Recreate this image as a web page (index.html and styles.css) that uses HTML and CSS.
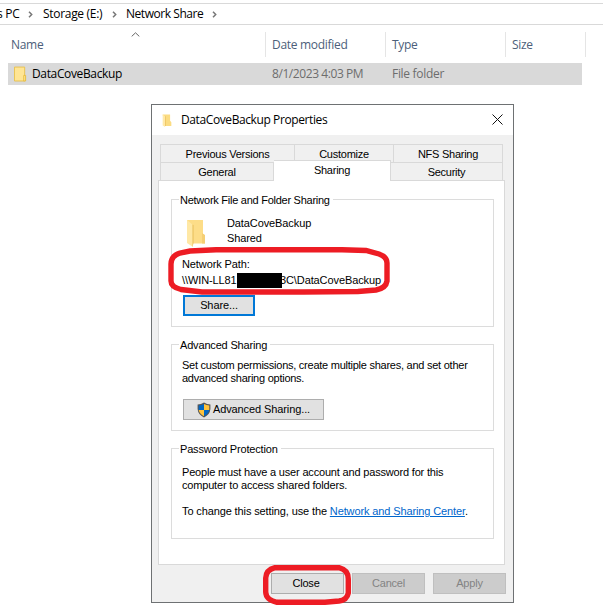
FILE: index.html
```html
<!DOCTYPE html>
<html lang="en">
<head>
<meta charset="utf-8">
<title>DataCoveBackup Properties</title>
<link rel="stylesheet" href="styles.css">
</head>
<body>
<main class="explorer">
  <nav class="crumbs">
    <span class="crumb-cut">s PC</span>
    <svg class="chev" viewBox="0 0 5 7"><path d="M1 .8 3.7 3.5 1 6.2"/></svg>
    <span class="crumb-drive">Storage (E:)</span>
    <svg class="chev" viewBox="0 0 5 7"><path d="M1 .8 3.7 3.5 1 6.2"/></svg>
    <span class="crumb-share">Network Share</span>
    <svg class="chev" viewBox="0 0 5 7"><path d="M1 .8 3.7 3.5 1 6.2"/></svg>
  </nav>
  <div class="columns head">
    <span class="name-head">Name<svg class="sort" viewBox="0 0 9 5"><path d="M.7 4.4 4.5.8 8.3 4.4"/></svg></span>
    <span>Date modified</span><span>Type</span><span>Size</span>
  </div>
  <div class="columns row">
    <span class="file">
      <svg class="folder-flat" viewBox="0 0 14 17"><path d="M.5.5h11v15H.5z" fill="#ffe594" stroke="#e8c04b"/><path d="M10.5 9.5h2v6h-2z" fill="#ffe594" stroke="#e8bd3e"/></svg>
      <span>DataCoveBackup</span>
    </span>
    <span class="date">8/1/2023 4:03 PM</span><span>File folder</span><span></span>
  </div>
</main>

<section class="dialog">
  <header class="titlebar">
    <svg class="folder-small" viewBox="0 0 30 42"><path d="M1 2h24v20l4 5v12H8z" fill="#fbdc82"/><path d="M1 2l8 6v34l-8-5z" fill="#ffe9a9"/><path d="M9 8v31h2V6z" fill="#e8bd57"/></svg>
    <h1>DataCoveBackup Properties</h1>
    <svg class="x" viewBox="0 0 11 11"><path d="M.5.5l10 10M10.5.5l-10 10"/></svg>
  </header>
  <div class="tabs">
    <div class="tab-row back"><span class="t-prev">Previous Versions</span><span class="t-cust">Customize</span><span class="t-nfs">NFS Sharing</span></div>
    <div class="tab-row front"><span class="t-gen">General</span><span class="t-share">Sharing</span><span class="t-sec">Security</span></div>
  </div>
  <div class="pane">
    <section class="group g1">
      <h2>Network File and Folder Sharing</h2>
      <div class="shared">
        <svg class="folder-big" viewBox="0 0 19 28"><path d="M0 0h16v14l2 1.500v8H5z" fill="#fddd88"/><path d="M0 0l6 5v22l-6-4z" fill="#ffe8a5"/><path d="M5.500 4.500L6.500 5v18l-1 4z" fill="#e7bd59"/><path d="M15 13l3 2v8.500h-3z" fill="#f5cf74"/></svg>
        <p>DataCoveBackup<br>Shared</p>
      </div>
      <div class="path">
        <p class="path-label">Network Path:</p>
        <p class="path-value"><span class="host">\\WIN-LL81</span><span class="redacted"></span><span class="tail">3C\DataCoveBackup</span></p>
        <svg class="ring" viewBox="0 0 222 48"><path d="M22 4 48 2.700H174L198 3.500 211 7Q219 10 219 16V34Q218 41 208 43L190 44.500 135 45H34L13 42.500Q3 40 3 34V17Q3 9 12 6Z"/></svg>
      </div>
      <button class="share">Share...</button>
    </section>
    <section class="group g2">
      <h2>Advanced Sharing</h2>
      <p>Set custom permissions, create multiple shares, and set other<br>advanced sharing options.</p>
      <button class="advanced">
        <svg class="shield" viewBox="0 0 14 16"><path d="M7 .5Q10 2.500 13.400 2.500V7Q13 12.500 7 15.500 1 12.500.6 7V2.500Q4 2.500 7 .5Z" fill="#555"/><path d="M7 1.900V8H1.700V3.500Q4.500 3.300 7 1.900ZM7 8h5.300Q11.500 12 7 14.300Z" fill="#0067c5"/><path d="M7 1.900V8h5.300V3.500Q9.500 3.300 7 1.900ZM7 8H1.700Q2.500 12 7 14.300Z" fill="#ffc23b"/></svg><span>Advanced Sharing...</span>
      </button>
    </section>
    <section class="group g3">
      <h2>Password Protection</h2>
      <p class="need">People must have a user account and password for this<br>computer to access shared folders.</p>
      <p class="change">To change this setting, use the <a>Network and Sharing Center</a>.</p>
    </section>
  </div>
  <footer>
    <div class="close-wrap">
      <button>Close</button>
      <svg class="ring" viewBox="0 0 88 40"><path d="M12 2.700H76Q85.300 5 85.300 14V28Q84 35 76 36L62 37.300H14Q3 35 2.700 27V13Q3 5 12 2.700Z"/></svg>
    </div>
    <button disabled>Cancel</button>
    <button disabled>Apply</button>
  </footer>
</section>
</body>
</html>
```

FILE: styles.css
```css
* { box-sizing: border-box; }
body { margin: 0; background: #fff; color: #000; font: 11px/13px "Liberation Sans", Arial, sans-serif; letter-spacing: -0.1px; width: 603px; height: 615px; overflow: hidden; }
h1, h2, p { margin: 0; font-size: inherit; font-weight: normal; }
svg { display: block; fill: none; flex: none; }
span { white-space: nowrap; }

.explorer { height: 104px; padding-top: 3px; font: 12px/16px "Open Sans", "Noto Sans", sans-serif; letter-spacing: -0.3px; }
.crumbs { display: flex; align-items: center; height: 22px; border: solid #d9d9d9; border-width: 1px 0; }
.crumb-cut { width: 29px; margin-left: -3px; }
.crumb-drive { width: 60px; margin-left: 10px; }
.crumb-share { width: 78px; margin-left: 9px; letter-spacing: -0.45px; }
.crumb-drive + .chev { margin-left: 9px; }
.crumb-share + .chev { margin-left: 8px; }
.chev { width: 5px; height: 7px; stroke: #777; stroke-width: 1.5; margin-left: 2px; }
.columns { display: grid; grid-template-columns: 258px 120px 120px 80px; margin-left: 8px; }
.head { height: 25px; margin-top: 7px; color: #4c607a; }
.head span { border-right: 1px solid #e5e5e5; padding: 5px 0 0 6px; height: 25px; }
.head .name-head { padding-left: 3px; display: flex; }
.sort { width: 9px; height: 5px; stroke: #666; margin: -5px 0 0 88px; }
.row { width: 574px; height: 22px; margin-top: 6px; background: #d9d9d9; color: #6d6d6d; align-items: center; }
.row > span { padding-left: 6px; }
.row .file { display: flex; align-items: center; gap: 5px; color: #000; letter-spacing: -0.36px; }
.row .date { letter-spacing: -0.42px; }
.folder-flat { width: 13px; height: 17px; }

.dialog { width: 363px; height: 499px; margin-left: 151px; border: 1px solid #6e7173; background: #f0f0f0; }
.titlebar { display: flex; align-items: center; height: 30px; background: #fff; padding: 0 10px; font: 12px/16px "Open Sans", "Noto Sans", sans-serif; letter-spacing: -0.4px; }
.folder-small { width: 10px; height: 13px; }
h1 { margin-left: 9px; flex: 1; }
.x { width: 11px; height: 11px; stroke: #111; margin-top: -2px; }

.tabs { margin: 9px 10px 0 8px; text-align: center; line-height: 17px; letter-spacing: -0.25px; }
.tab-row { display: flex; }
.tab-row span { border: 1px solid #d9d9d9; border-width: 1px 1px 0 0; padding-top: 1px; }
.tab-row span:first-child { border-left-width: 1px; }
.back { height: 18px; }
.front { height: 18px; align-items: flex-start; }
.front span { height: 18px; }
.t-prev { width: 135px; }
.t-cust { width: 99px; }
.t-nfs { width: 109px; }
.t-gen { width: 114px; }
.tab-row .t-share { position: relative; width: 117px; height: 21px; margin-top: -2px; background: #fff; }
.t-sec { width: 112px; }

.pane { width: 347px; height: 385px; margin-left: 6px; padding: 18px 11px 0 12px; border: 1px solid #d9d9d9; background: #fff; }
.group { width: 323px; border: 1px solid #dcdcdc; padding-left: 10px; }
h2 { width: max-content; margin: -6px 0 0 -3px; padding: 0 3px 0 1px; background: #fff; letter-spacing: -0.17px; }
.g1 h2 { letter-spacing: -0.26px; }
.g1 { height: 128px; }
.g2 { height: 87px; margin-top: 17px; }
.g3 { height: 91px; margin-top: 17px; }
.shared { display: flex; height: 46px; padding: 12px 0 0 5px; }
.folder-big { width: 19px; height: 28px; margin-top: 1px; }
.shared p { margin: -3px 0 0 21px; line-height: 15px; }
.path { position: relative; height: 41px; padding-top: 4px; }
.path-label { line-height: 15px; }
.path-value { display: flex; align-items: center; height: 16px; }
.host { width: 55px; }
.redacted { position: relative; z-index: 1; width: 45px; height: 15px; background: #000; }
.tail { width: 99px; display: flex; justify-content: flex-end; }
.ring { position: absolute; stroke: #ed1c24; stroke-width: 5.400; }
.path .ring { left: -14px; top: -6px; width: 222px; height: 48px; z-index: 2; }
button { font: inherit; letter-spacing: inherit; color: #000; background: #e1e1e1; border: 1px solid #adadad; padding: 0; height: 21px; }
.share { display: block; width: 72px; border: 2px solid #0078d7; margin: 1px 0 0 1px; }
.g2 p { margin-top: 7px; letter-spacing: -0.25px; }
.g2 p::first-line { letter-spacing: -0.25px; }
.advanced { display: flex; align-items: center; justify-content: center; width: 141px; margin: 14px 0 0 1px; gap: 2px; }
.shield { width: 14px; height: 16px; }
.need { margin-top: 10px; letter-spacing: -0.18px; }
.change { margin-top: 13px; letter-spacing: -0.12px; }
a { color: #0066cc; text-decoration: underline; }
footer { display: flex; justify-content: flex-end; gap: 8px; padding: 8px 7px 0 0; letter-spacing: -0.2px; }
footer button { width: 73px; }
.close-wrap { position: relative; width: 73px; }
.close-wrap button { padding-right: 3px; }
.close-wrap .ring { left: -8px; top: -8px; width: 88px; height: 40px; }
button:disabled { color: #838383; background: #ccc; border-color: #bfbfbf; }
```
